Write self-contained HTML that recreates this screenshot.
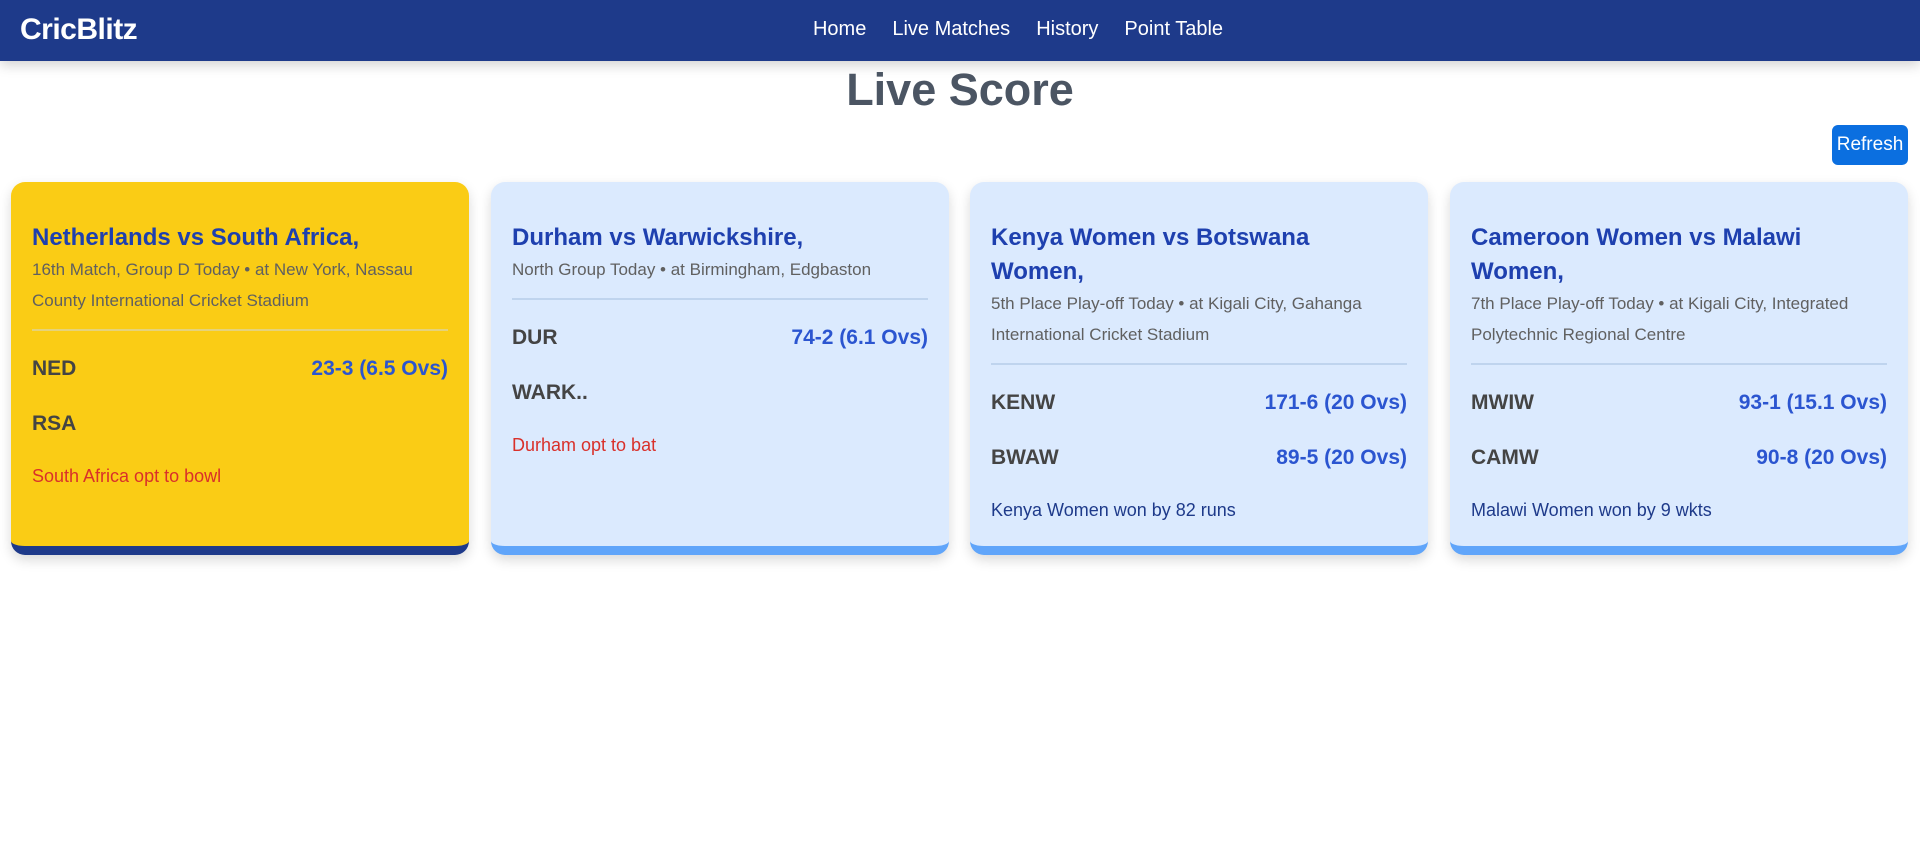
<!DOCTYPE html>
<html><head><meta charset="utf-8"><style>
*{box-sizing:border-box;margin:0;padding:0}
body{width:1920px;height:853px;background:#fff;font-family:"Liberation Sans",Arial,sans-serif;position:relative;overflow:hidden}
.nav{position:absolute;left:0;top:0;width:1920px;height:61px;background:#1e3a8a;box-shadow:0 4px 12px rgba(0,0,0,.18)}
.logo{position:absolute;left:20px;top:13px;color:#fff;font-size:30px;font-weight:bold;letter-spacing:-0.5px}
.links{position:absolute;left:796px;width:444px;top:18px;text-align:center;color:#fff;font-size:20px;white-space:nowrap}
.links span{margin:0 13px}
h1{position:absolute;left:0;width:1920px;top:63px;text-align:center;font-size:45px;color:#4b5563;font-weight:bold;line-height:54px}
.btn{position:absolute;left:1832px;top:125px;width:76px;height:40px;background:#0b6fe0;color:#fff;border-radius:6px;font-size:19px;text-align:center;line-height:40px}
.card{position:absolute;top:182px;width:458px;height:373px;background:#dbeafe;border-radius:14px;border-bottom:9px solid #60a5fa;box-shadow:0 5px 12px rgba(0,0,0,.15);padding:39px 21px 0}
.card.y{background:#facc15;border-bottom-color:#1e3a8a}
.t{font-size:24px;font-weight:bold;color:#1e40af;line-height:34px;white-space:nowrap}
.s{font-size:17px;color:#606060;line-height:31px;margin-top:-1px}
.hr{height:2px;background:#bfd4ee;margin:13px 0 10px}
.y .hr{background:#e5d27a}
.row{display:flex;justify-content:space-between;height:55px;line-height:55px;font-size:21px;font-weight:bold}
.row b{color:#444}
.row i{font-style:normal;color:#2b55d0}
.st{margin-top:13px;font-size:18px;line-height:24px;color:#d9302a}
.res{margin-top:13px;font-size:18px;line-height:24px;color:#1e3a8a}
</style></head><body>
<div class="nav"><div class="logo">CricBlitz</div>
<div class="links"><span>Home</span><span>Live Matches</span><span>History</span><span>Point Table</span></div></div>
<h1>Live Score</h1>
<div class="btn">Refresh</div>

<div class="card y" style="left:11px">
<div class="t">Netherlands vs South Africa,</div>
<div class="s">16th Match, Group D Today • at New York, Nassau County International Cricket Stadium</div>
<div class="hr"></div>
<div class="row"><b>NED</b><i>23-3 (6.5 Ovs)</i></div>
<div class="row"><b>RSA</b><i></i></div>
<div class="st">South Africa opt to bowl</div>
</div>

<div class="card" style="left:491px">
<div class="t">Durham vs Warwickshire,</div>
<div class="s">North Group Today • at Birmingham, Edgbaston</div>
<div class="hr"></div>
<div class="row"><b>DUR</b><i>74-2 (6.1 Ovs)</i></div>
<div class="row"><b>WARK..</b><i></i></div>
<div class="st">Durham opt to bat</div>
</div>

<div class="card" style="left:970px">
<div class="t">Kenya Women vs Botswana<br>Women,</div>
<div class="s">5th Place Play-off Today • at Kigali City, Gahanga International Cricket Stadium</div>
<div class="hr"></div>
<div class="row"><b>KENW</b><i>171-6 (20 Ovs)</i></div>
<div class="row"><b>BWAW</b><i>89-5 (20 Ovs)</i></div>
<div class="res">Kenya Women won by 82 runs</div>
</div>

<div class="card" style="left:1450px">
<div class="t">Cameroon Women vs Malawi<br>Women,</div>
<div class="s">7th Place Play-off Today • at Kigali City, Integrated Polytechnic Regional Centre</div>
<div class="hr"></div>
<div class="row"><b>MWIW</b><i>93-1 (15.1 Ovs)</i></div>
<div class="row"><b>CAMW</b><i>90-8 (20 Ovs)</i></div>
<div class="res">Malawi Women won by 9 wkts</div>
</div>
</body></html>
